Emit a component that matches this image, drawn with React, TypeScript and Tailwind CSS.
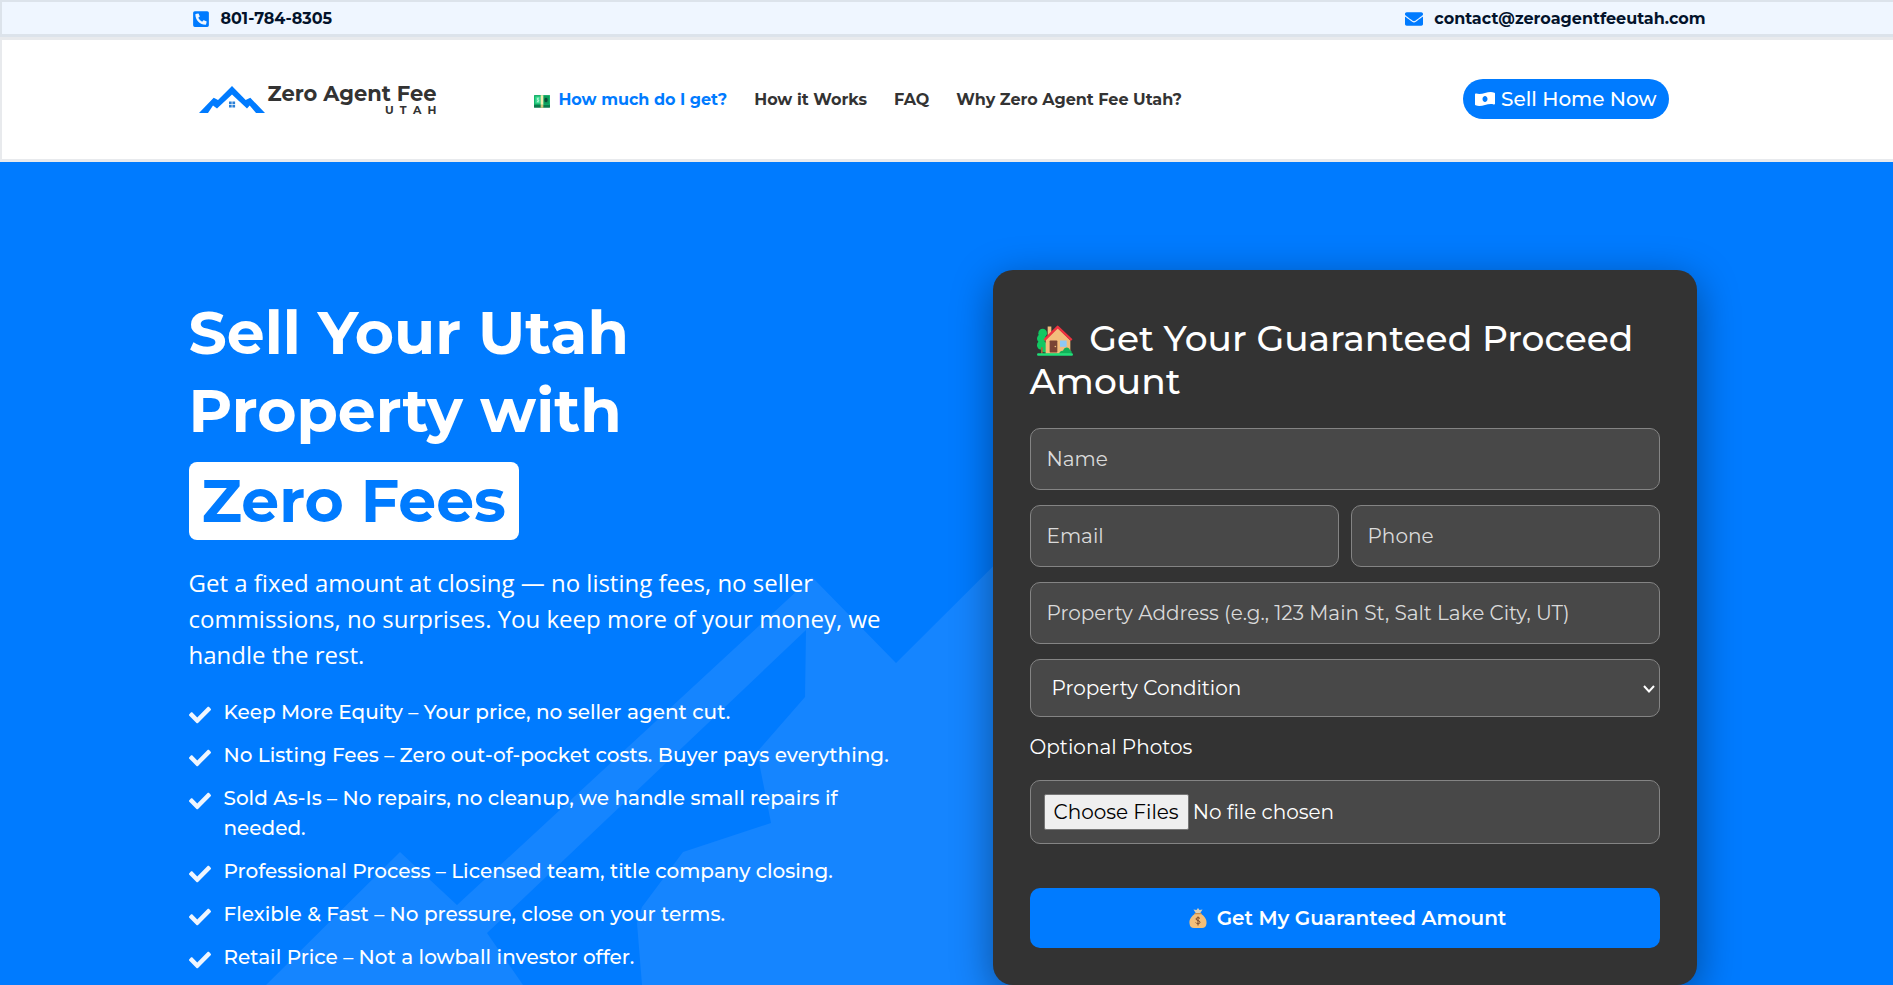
import React from "react";
import { FaCheck, FaEnvelope, FaMoneyBillWaveAlt, FaPhoneSquareAlt } from "react-icons/fa";

const benefits = [
  "Keep More Equity – Your price, no seller agent cut.",
  "No Listing Fees – Zero out-of-pocket costs. Buyer pays everything.",
  "Sold As-Is – No repairs, no cleanup, we handle small repairs if needed.",
  "Professional Process – Licensed team, title company closing.",
  "Flexible & Fast – No pressure, close on your terms.",
  "Retail Price – Not a lowball investor offer.",
];

const box = "block w-full min-w-0 rounded-[10px] border border-[#848484] bg-[#484848] text-[20px] text-white";
const field = `${box} h-[62px] px-4 placeholder:text-[#dadada] placeholder:opacity-100`;

function TopBar() {
  return (
    <div className="border-t-2 border-b-[3px] border-l-2 border-[#dce3eb] bg-[#eff6ff]">
      <div className="mx-auto flex h-8 w-full max-w-[1516px] items-center justify-between pt-0.5 pl-[3px] text-[16px] font-bold text-[#03132b]">
        <a href="tel:8017848305" className="flex items-center gap-3">
          <FaPhoneSquareAlt className="h-[18px] w-4 text-[#007bff]" />
          801-784-8305
        </a>
        <a href="mailto:contact@zeroagentfeeutah.com" className="flex items-center gap-[11px]">
          <FaEnvelope className="size-[18px] text-[#007bff]" />
          contact@zeroagentfeeutah.com
        </a>
      </div>
    </div>
  );
}

function Logo() {
  return (
    <a href="#home" aria-label="Zero Agent Fee Utah" className="flex items-center gap-[3px] text-[#333]">
      <svg viewBox="0 0 66 27" className="h-[27px] w-[66px]" aria-hidden="true">
        <path
          fill="#007bff"
          d="M0 27 14.700 11.700 19 14 33 0 46.700 14 51.300 11.700 66 27H57L50.700 19.500 48 22.500 33 8.500 18 22.500 14 19.500 9 27Z"
        />
        <path
          fill="#2a7fd6"
          d="M30 15.500h2.700v2.700H30Zm3.400 0h2.700v2.700h-2.700ZM30 18.900h2.700v2.700H30Zm3.400 0h2.700v2.700h-2.700Z"
        />
      </svg>
      <span className="flex flex-col items-end">
        <span className="text-[21px] leading-[22px] font-bold">Zero Agent Fee</span>
        <span className="text-[11px] leading-[11px] font-bold">U&nbsp; T&nbsp; A&nbsp; H</span>
      </span>
    </a>
  );
}

function Banknotes() {
  return (
    <svg viewBox="0 0 48 38" className="mt-0.5 h-[13px] w-4" aria-hidden="true">
      <rect width="48" height="38" rx="2" fill="#0a7a4c" />
      <rect width="48" height="29" rx="2" fill="#12b76a" />
      <rect x="4" y="4" width="16" height="21" fill="#3fd992" />
      <path d="M14 9c-5-1-6 4-2 5s3 6-3 5M12 7v15" stroke="#d6ffe9" strokeWidth="2" fill="none" />
      <rect x="28" y="3" width="17" height="23" fill="#0d9a5a" />
      <ellipse cx="36" cy="14.500" rx="5" ry="7" fill="#0b4d35" />
      <rect x="20" width="8" height="29" fill="#f3eeb0" />
      <rect x="20" y="29" width="8" height="9" fill="#cfc67c" />
    </svg>
  );
}

function House() {
  return (
    <svg
      viewBox="0 0 108 92"
      className="mr-[7px] ml-[7px] inline-block h-[31px] w-9 align-[-5px]"
      aria-hidden="true"
    >
      <g fill="#12c862">
        <circle cx="17" cy="24" r="13" />
        <circle cx="13" cy="40" r="13" />
        <circle cx="14" cy="60" r="14" />
        <circle cx="24" cy="70" r="12" />
      </g>
      <path fill="#a8683c" d="M12 66h5v20h-5Z" />
      <path fill="#f3bd7c" d="M32 4h11v26H32Z" />
      <path fill="#f3bd7c" d="M62 8 100 46V86H26V44Z" />
      <path d="M22 45 62 5l42 40" fill="none" stroke="#ef3340" strokeWidth="7" strokeLinejoin="round" />
      <rect x="38" y="46" width="23" height="36" rx="2" fill="#7a4334" />
      <circle cx="55" cy="64" r="2.500" fill="#f3bd7c" />
      <rect x="69" y="46" width="20" height="19" fill="#8fc8f5" />
      <path fill="#12b259" d="M66 86c2-8 8-10 12-9 3-12 18-14 21-2 5 1 6 6 5 11Z" />
      <rect y="84" width="108" height="8" rx="4" fill="#1fe07a" />
    </svg>
  );
}

function MoneyBag() {
  return (
    <svg viewBox="0 0 36 40" className="h-5 w-[18px]" aria-hidden="true">
      <path fill="#d9cdb4" d="m18 0 3 4 6-1-5 8h-8L9 3l6 1Z" />
      <path fill="#f3bf7a" d="M13 11h10c8 5 13 12 12 20-.5 6-4 9-9 9H10c-5 0-8.500-3-9-9C0 23 5 16 13 11Z" />
      <path stroke="#c98f4c" strokeWidth="2.500" strokeLinecap="round" d="M12 11h12" />
      <path
        d="M22 21c-2-3-8-2-8 1 0 4 8 2 8 6.500 0 4-7 4-8.500.5M18 17v18"
        fill="none"
        stroke="#7c4a2b"
        strokeWidth="2"
      />
    </svg>
  );
}

function Header() {
  return (
    <header className="border-y-[3px] border-l-2 border-[#e8eaed] bg-white">
      <div className="mx-auto flex h-[119px] w-full max-w-[1516px] items-center pr-[37px] pb-px pl-[9px]">
        <Logo />
        <nav className="ml-[98px] flex items-center gap-[27px] pt-0.5 text-[16px] font-bold whitespace-nowrap text-[#333]">
          <a href="#amount" className="flex items-center gap-2 text-[#007bff]">
            <Banknotes />
            How much do I get?
          </a>
          <a href="#how">How it Works</a>
          <a href="#faq">FAQ</a>
          <a href="#why">Why Zero Agent Fee Utah?</a>
        </nav>
        <a
          href="#sell"
          className="ml-auto flex h-10 items-center gap-1.5 rounded-full bg-[#007bff] px-3 text-[20px] font-medium whitespace-nowrap text-white"
        >
          <FaMoneyBillWaveAlt className="size-5" />
          Sell Home Now
        </a>
      </div>
    </header>
  );
}

function Watermark() {
  return (
    <svg
      viewBox="0 162 1893 823"
      preserveAspectRatio="xMidYMin slice"
      className="absolute inset-0 h-full w-full"
      aria-hidden="true"
    >
      <path
        fill="#1585ff"
        d="M266 985 400 852 457 905 812 577 896 663 1100 460V985H642L637 923 642 907 683 852 771 823 757 752 805 697 806 630 487 933 523 985Z"
      />
    </svg>
  );
}

function Pitch() {
  return (
    <div className="pt-6 text-white">
      <h1 className="text-[60px] leading-[78px] font-bold">
        Sell Your Utah
        <br />
        Property with
        <br />
        <span className="mt-3 inline-block rounded-lg bg-white px-[13px] text-[#007bff]">Zero Fees</span>
      </h1>
      <p className="mt-[25px] font-['Open_Sans','Noto_Sans',sans-serif] text-[24px] leading-[36px]">
        Get a fixed amount at closing — no listing fees, no seller commissions, no surprises. You keep more of your
        money, we handle the rest.
      </p>
      <ul className="mt-6 flex flex-col gap-[13px] text-[20px] leading-[30px] font-medium">
        {benefits.map((benefit) => (
          <li key={benefit} className="flex items-start gap-[13px]">
            <FaCheck className="mt-[7px] size-[22px] shrink-0 text-[#eff6ff]" />
            {benefit}
          </li>
        ))}
      </ul>
    </div>
  );
}

function ProceedForm() {
  return (
    <form className="rounded-[20px] bg-[#333] px-[37px] pt-[47px] pb-[37px] text-white shadow-[0_10px_40px_rgba(0,0,0,0.4)]">
      <h2 className="text-[36px] leading-[43px] font-medium">
        <House /> Get Your Guaranteed Proceed Amount
      </h2>
      <div className="mt-[25px] flex flex-col gap-[15px]">
        <input aria-label="Name" placeholder="Name" className={field} />
        <div className="flex gap-3">
          <input type="email" aria-label="Email" placeholder="Email" className={field} />
          <input type="tel" aria-label="Phone" placeholder="Phone" className={field} />
        </div>
        <input
          aria-label="Property Address"
          placeholder="Property Address (e.g., 123 Main St, Salt Lake City, UT)"
          className={field}
        />
        <div className="relative">
          <select aria-label="Property Condition" className={`${box} h-[58px] appearance-none pr-8 pl-[21px]`}>
            <option>Property Condition</option>
          </select>
          <svg
            viewBox="0 0 12 8"
            className="pointer-events-none absolute top-[26px] right-[5px] h-2 w-3"
            fill="none"
            stroke="#fff"
            strokeWidth="2"
            aria-hidden="true"
          >
            <path d="m1 1 5 5.500L11 1" />
          </svg>
        </div>
      </div>
      <label htmlFor="photos" className="mt-[15px] block text-[20px] leading-[30px]">
        Optional Photos
      </label>
      <input
        id="photos"
        type="file"
        multiple
        className={`${box} mt-[18px] h-16 px-[13px] py-[13px] file:mr-1 file:h-9 file:rounded-[2px] file:border file:border-solid file:border-[#767676] file:bg-[#efefef] file:px-[9px] file:text-black`}
      />
      <button
        type="submit"
        className="mt-11 flex h-[60px] w-full items-center justify-center gap-2.5 rounded-[10px] bg-[#007bff] pl-1.5 text-[20px] font-semibold"
      >
        <MoneyBag />
        Get My Guaranteed Amount
      </button>
    </form>
  );
}

export default function App() {
  return (
    <div className="min-h-screen overflow-x-hidden bg-[#007bff] font-['Montserrat','Inter',sans-serif]">
      <TopBar />
      <Header />
      <main className="relative bg-[#007bff]">
        <Watermark />
        <section className="relative mx-auto grid w-full max-w-[1516px] grid-cols-2 items-start gap-[100px] pt-[108px] pr-2">
          <Pitch />
          <ProceedForm />
        </section>
      </main>
    </div>
  );
}
